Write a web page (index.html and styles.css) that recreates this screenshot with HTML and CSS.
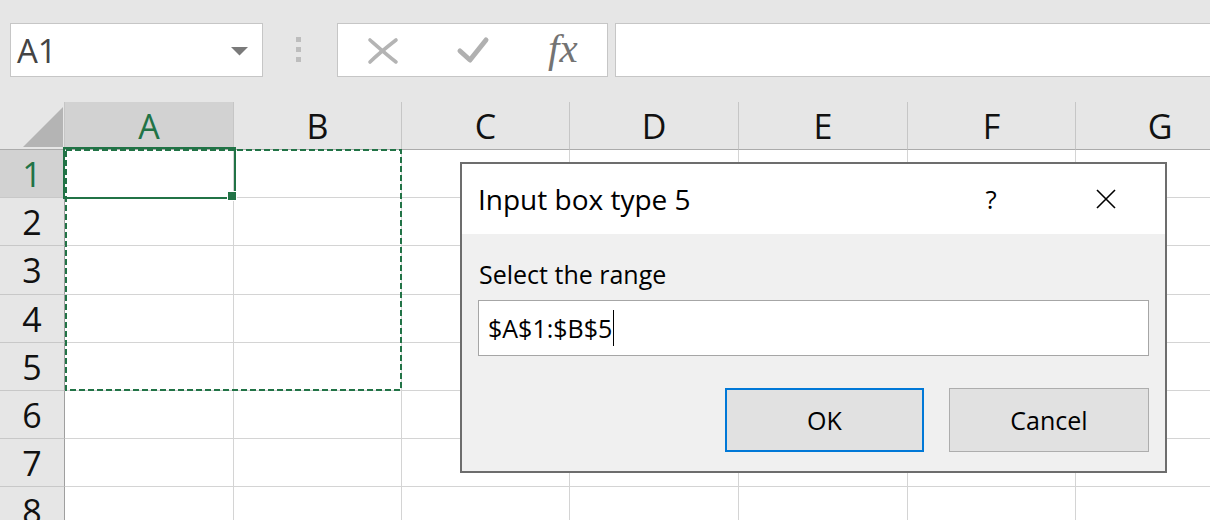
FILE: index.html
```html
<!DOCTYPE html>
<html>
<head>
<meta charset="utf-8">
<link rel="stylesheet" href="styles.css">
</head>
<body>
<div class="toolbar">
  <div class="namebox">
    <span class="nb-text">A1</span>
    <svg class="nb-arrow" width="17" height="9" viewBox="0 0 17 9"><polygon points="0,0 17,0 8.5,8.5" fill="#7a7a7a"/></svg>
  </div>
  <div class="grip"><i></i><i></i><i></i></div>
  <div class="fxbox">
    <svg class="ic-x" width="32" height="28" viewBox="0 0 32 28">
      <path d="M3 3 C 11 10, 20 18, 29 25" stroke="#b4b4b4" stroke-width="3.6" stroke-linecap="round" fill="none"/>
      <path d="M29 3 C 20 10, 11 17, 3 25" stroke="#b4b4b4" stroke-width="3.6" stroke-linecap="round" fill="none"/>
    </svg>
    <svg class="ic-check" width="34" height="28" viewBox="0 0 34 28">
      <polyline points="4,15 14,24 30,4" stroke="#b0b0b0" stroke-width="5" stroke-linecap="round" stroke-linejoin="round" fill="none"/>
    </svg>
    <span class="fx">fx</span>
  </div>
  <div class="formula"></div>
</div>

<div class="sheet">
  <div class="corner"><svg width="40" height="40" viewBox="0 0 40 40"><polygon points="40,0 40,40 0,40" fill="#b4b4b4"/></svg></div>
  <div class="ch sel">A</div>
  <div class="ch">B</div>
  <div class="ch">C</div>
  <div class="ch">D</div>
  <div class="ch">E</div>
  <div class="ch">F</div>
  <div class="ch">G</div>

  <div class="rh sel">1</div><div class="c"></div><div class="c"></div><div class="c"></div><div class="c"></div><div class="c"></div><div class="c"></div><div class="c"></div>
  <div class="rh">2</div><div class="c"></div><div class="c"></div><div class="c"></div><div class="c"></div><div class="c"></div><div class="c"></div><div class="c"></div>
  <div class="rh">3</div><div class="c"></div><div class="c"></div><div class="c"></div><div class="c"></div><div class="c"></div><div class="c"></div><div class="c"></div>
  <div class="rh">4</div><div class="c"></div><div class="c"></div><div class="c"></div><div class="c"></div><div class="c"></div><div class="c"></div><div class="c"></div>
  <div class="rh">5</div><div class="c"></div><div class="c"></div><div class="c"></div><div class="c"></div><div class="c"></div><div class="c"></div><div class="c"></div>
  <div class="rh">6</div><div class="c"></div><div class="c"></div><div class="c"></div><div class="c"></div><div class="c"></div><div class="c"></div><div class="c"></div>
  <div class="rh">7</div><div class="c"></div><div class="c"></div><div class="c"></div><div class="c"></div><div class="c"></div><div class="c"></div><div class="c"></div>
  <div class="rh">8</div><div class="c"></div><div class="c"></div><div class="c"></div><div class="c"></div><div class="c"></div><div class="c"></div><div class="c"></div>

  <div class="active"></div>
  <svg class="marquee" width="337" height="242" viewBox="0 0 337 242"><rect x="1" y="1" width="335" height="240" fill="none" stroke="#217346" stroke-width="2" stroke-dasharray="6 3"/></svg>
  <div class="handle"></div>
</div>

<div class="dialog">
  <div class="dlg-title">
    <span class="dlg-text">Input box type 5</span>
    <span class="help">?</span>
    <svg class="close" width="20" height="20" viewBox="0 0 20 20"><path d="M1 1 L19 19 M19 1 L1 19" stroke="#000" stroke-width="1.6" fill="none"/></svg>
  </div>
  <div class="dlg-body">
    <div class="label">Select the range</div>
    <div class="input"><span>$A$1:$B$5</span><i class="caret"></i></div>
    <div class="buttons">
      <div class="btn ok">OK</div>
      <div class="btn">Cancel</div>
    </div>
  </div>
</div>
</body>
</html>
```

FILE: styles.css
```css
* { box-sizing: border-box; margin: 0; padding: 0; }
html, body { width: 1210px; height: 520px; overflow: hidden; }
body {
  background: #e6e6e6;
  font-family: "Open Sans", "Noto Sans", sans-serif;
  position: relative;
  color: #000;
}

.toolbar {
  height: 102px;
  display: flex;
  align-items: flex-start;
  padding: 23px 0 0 10px;
}
.namebox {
  width: 253px;
  height: 54px;
  background: #fff;
  border: 1px solid #c6c6c6;
  display: flex;
  align-items: center;
  justify-content: space-between;
  padding: 0 14px 0 6px;
}
.nb-text { font-size: 33px; color: #444; line-height: 1; }
.nb-arrow { display: block; margin-top: 2px; }
.grip {
  margin: 14px 0 0 33px;
  display: flex;
  flex-direction: column;
  gap: 5px;
}
.grip i { display: block; width: 5px; height: 5px; background: #bdbdbd; }
.fxbox {
  margin-left: 36px;
  width: 271px;
  height: 54px;
  background: #fff;
  border: 1px solid #c6c6c6;
  display: flex;
  align-items: center;
  padding-left: 29px;
}
.ic-x { display: block; margin-top: 1px; }
.ic-check { display: block; margin-left: 57px; }
.fx {
  margin-left: 58px;
  font-family: "Liberation Serif", "DejaVu Serif", serif;
  font-style: italic;
  font-size: 41px;
  color: #737373;
  line-height: 1;
  margin-top: -3px;
}
.formula {
  flex: 1;
  margin-left: 7px;
  height: 54px;
  background: #fff;
  border: 1px solid #c6c6c6;
  border-right: none;
}

.sheet {
  position: relative;
  display: grid;
  grid-template-columns: 65px 169px 168px 168px 169px 169px 168px 169px;
  grid-template-rows: 48px 48px 48px 49px 48px 48px 48px 48px 48px;
  width: max-content;
}
.corner {
  border-right: 1px solid #c6c6c6;
  border-bottom: 1px solid #ababab;
  display: flex;
  justify-content: flex-end;
  align-items: flex-end;
  padding: 0 1px 2px 0;
}
.corner svg { display: block; }
.ch {
  border-right: 1px solid #c6c6c6;
  border-bottom: 1px solid #ababab;
  display: flex;
  align-items: center;
  justify-content: center;
  font-size: 34px;
  color: #111;
  line-height: 1;
}
.rh {
  background: #e6e6e6;
  border-right: 1px solid #9f9f9f;
  border-bottom: 1px solid #c8c8c8;
  display: flex;
  align-items: center;
  justify-content: center;
  font-size: 34px;
  color: #111;
  line-height: 1;
}
.sel { background: #d2d2d2; color: #217346; }
.c {
  background: #fff;
  border-right: 1px solid #d4d4d4;
  border-bottom: 1px solid #d4d4d4;
}
.active {
  position: absolute;
  left: 63px;
  top: 45px;
  width: 173px;
  height: 52px;
  border: 2px solid #217346;
}
.marquee { position: absolute; left: 65px; top: 47px; display: block; }
.handle {
  position: absolute;
  left: 227px;
  top: 89px;
  width: 10px;
  height: 10px;
  background: #217346;
  border: 1px solid #fff;
}

.dialog {
  position: absolute;
  left: 460px;
  top: 162px;
  width: 707px;
  height: 311px;
  border: 2px solid #6d6d6d;
  display: flex;
  flex-direction: column;
  background: #f0f0f0;
}
.dlg-title {
  height: 70px;
  background: #fff;
  display: flex;
  align-items: center;
  padding-left: 16px;
}
.dlg-text { flex: 1; font-size: 28px; line-height: 1; }
.help { width: 40px; text-align: center; font-size: 26px; line-height: 1; }
.close { display: block; margin: 0 49px 0 85px; }
.dlg-body {
  flex: 1;
  padding: 24px 16px 0 16px;
  display: flex;
  flex-direction: column;
}
.label { font-size: 25px; line-height: 32px; padding-left: 1px; }
.input {
  margin-top: 10px;
  height: 56px;
  background: #fff;
  border: 1px solid #a6a6a6;
  display: flex;
  align-items: center;
  padding-left: 9px;
  font-size: 25px;
}
.caret { display: block; width: 1px; height: 36px; background: #000; margin-left: 1px; }
.buttons {
  margin-top: 32px;
  display: flex;
  justify-content: flex-end;
  gap: 25px;
}
.btn {
  width: 200px;
  height: 64px;
  background: #e1e1e1;
  border: 1px solid #adadad;
  display: flex;
  align-items: center;
  justify-content: center;
  font-size: 25px;
}
.btn.ok { width: 199px; border: 2px solid #0078d7; }
```
